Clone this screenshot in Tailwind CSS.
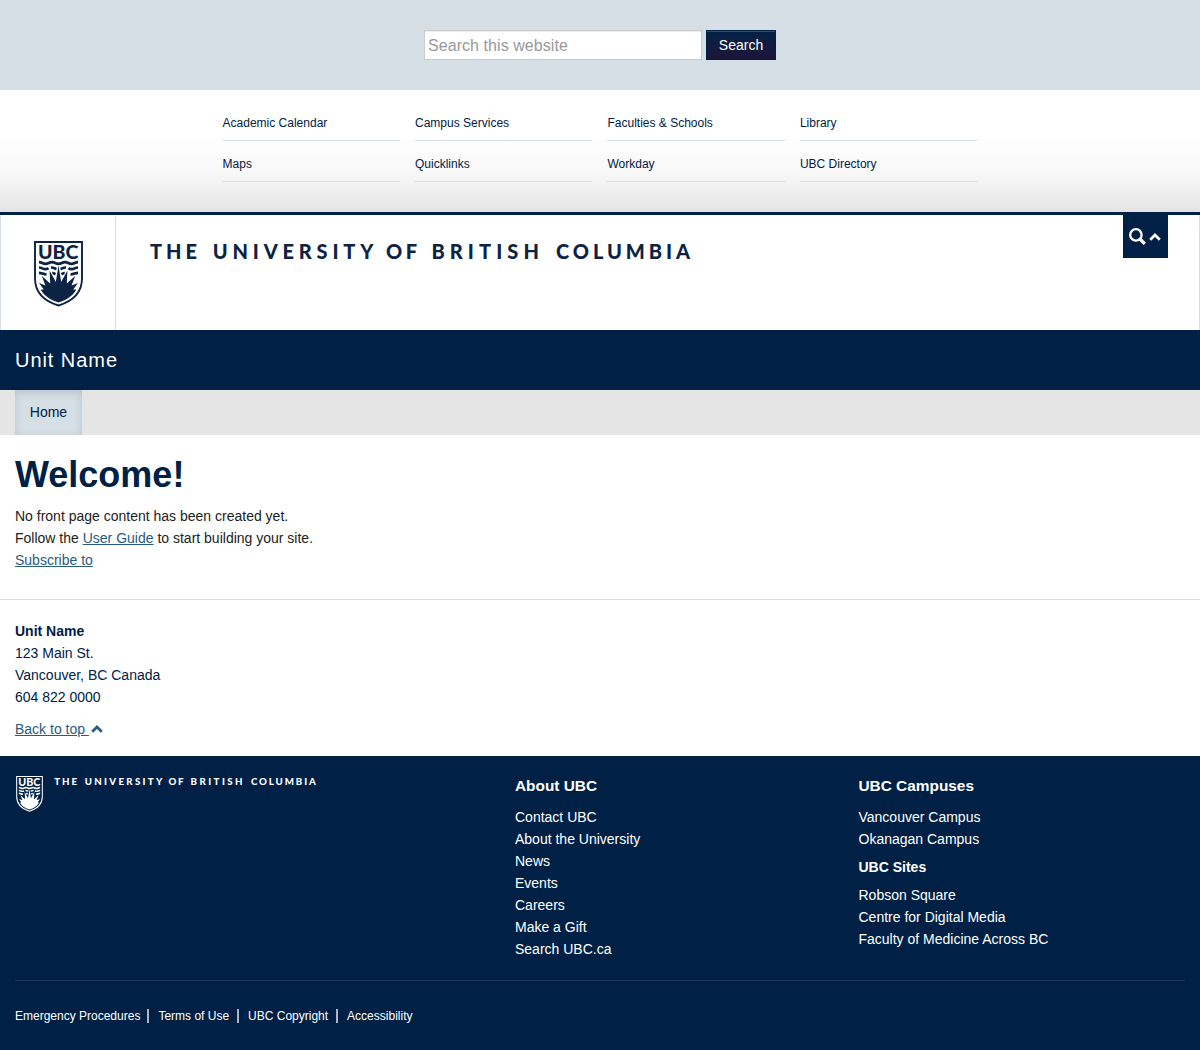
<!DOCTYPE html>
<html lang="en">
<head>
<meta charset="utf-8">
<title>Unit Name</title>
<script src="https://cdn.jsdelivr.net/npm/@tailwindcss/browser@4"></script>
</head>
<body class="bg-white font-['Liberation_Sans',Arial,sans-serif] text-sm/[22px] text-[#222222]">
<svg class="hidden">
  <symbol id="shield" viewBox="0 0 49 66">
    <path d="M1 1H48V37.500C48 52 39 60 24.500 64.500C10 60 1 52 1 37.500Z" fill="none" stroke="currentColor" stroke-width="1.900"/>
    <text x="4" y="17.900" font-family="Lato, sans-serif" font-weight="900" font-size="19.500" textLength="40.400" lengthAdjust="spacingAndGlyphs" fill="currentColor">UBC</text>
    <g fill="none" stroke="currentColor" stroke-width="2.700">
      <path d="M5 21.200C8 21.200 8.500 22.900 11.500 22.900S15 21.200 18 21.200S21.500 22.900 24.500 22.900S28 21.200 31 21.200S34.500 22.900 37.500 22.900S41 21.200 44 21.200"/>
      <path d="M5 26.500C8 26.500 8.500 28.200 11.500 28.200C13 28.200 13.500 27.800 14.500 27.200M17 26.500C19.500 26.300 20.500 27.500 22.500 28M26.500 28C28.500 27.500 29.500 26.300 32 26.500M34.500 27.200C35.500 27.800 36 28.200 37.500 28.200C40.500 28.200 41 26.500 44 26.500"/>
      <path d="M5 31.800C8 31.800 9 33.500 12.500 33.500M18.300 32C19.500 31.800 20.200 32.500 21.500 33.300M27.500 33.300C28.800 32.500 29.500 31.800 30.700 32M36.500 33.500C40 33.500 41 31.800 44 31.800"/>
    </g>
    <path d="M24.500 24.500L27.200 41L33.400 29.500L32.800 42.500L41.200 35L37.600 44.500L44 42L39.200 48.500L42.300 48.500C38.500 55.500 32 59 24.500 61.500C17 59 10.500 55.500 6.700 48.500L9.800 48.500L5 42L11.400 44.500L7.800 35L16.200 42.500L15.600 29.500L21.800 41Z" fill="currentColor"/>
  </symbol>
  <symbol id="wordmark" viewBox="0 0 542 20">
    <g font-family="Lato, sans-serif" font-weight="900" font-size="20" fill="currentColor">
      <text x="0" y="17.300" textLength="47">THE</text>
      <text x="62.800" y="17.300" textLength="160.500">UNIVERSITY</text>
      <text x="236" y="17.300" textLength="31">OF</text>
      <text x="281.400" y="17.300" textLength="107.500">BRITISH</text>
      <text x="406" y="17.300" textLength="134">COLUMBIA</text>
    </g>
  </symbol>
  <symbol id="chevron" viewBox="0 0 12 8">
    <path d="M1.200 6.800L6 2L10.800 6.800" fill="none" stroke="currentColor" stroke-width="2.700"/>
  </symbol>
</svg>

<section class="flex h-[90px] justify-center gap-1 bg-[#d6dfe6] pt-[30px]">
  <input type="text" placeholder="Search this website" class="h-[30px] w-[278px] border border-[#cccccc] bg-white px-[3px] pt-[2px] text-base tracking-[0.06px] shadow-[inset_0_1px_1px_rgba(0,0,0,0.075)] placeholder:text-[#999999]">
  <button class="h-[30px] w-[70px] border border-[#002145] bg-linear-to-b from-[#002145] to-[#1b1638] pb-px text-sm text-white shadow-[inset_0_1px_0_rgba(255,255,255,0.2)]">Search</button>
</section>

<nav class="h-[122px] bg-linear-to-b from-white from-35% via-[#f7f7f7] via-70% to-[#e4e4e4] pt-[10px]">
  <div class="ml-[222.600px] grid w-[754.500px] grid-cols-4 gap-x-[15.300px] text-xs/[15px] text-[#002145]">
    <a class="h-[41px] border-b border-[#d4dee6] pt-[16px]">Academic Calendar</a>
    <a class="h-[41px] border-b border-[#d4dee6] pt-[16px]">Campus Services</a>
    <a class="h-[41px] border-b border-[#d4dee6] pt-[16px]">Faculties &amp; Schools</a>
    <a class="h-[41px] border-b border-[#d4dee6] pt-[16px]">Library</a>
    <a class="h-[41px] border-b border-[#d4dee6] pt-[16px]">Maps</a>
    <a class="h-[41px] border-b border-[#d4dee6] pt-[16px]">Quicklinks</a>
    <a class="h-[41px] border-b border-[#d4dee6] pt-[16px]">Workday</a>
    <a class="h-[41px] border-b border-[#d4dee6] pt-[16px]">UBC Directory</a>
  </div>
</nav>

<header class="h-[118px] border-t-3 border-[#002145]">
  <div class="flex h-full border-x border-[#d6dfe6] text-[#0c2344]">
    <div class="h-full w-[115px] border-r border-[#d6dfe6] pt-[26px] pl-[33px]">
      <svg class="h-[66px] w-[49px]"><use href="#shield"/></svg>
    </div>
    <svg class="mt-[27px] ml-[34px] h-5 w-[542px]"><use href="#wordmark"/></svg>
    <button class="mr-[31px] ml-auto flex h-[43px] w-[45px] items-center bg-[#002145] pl-[6px] text-white">
      <svg class="size-[17px]" viewBox="0 0 17 17" fill="none" stroke="currentColor"><circle cx="6.900" cy="6.900" r="5.700" stroke-width="2.300"/><path d="M11 11L15.800 15.800" stroke-width="3.200"/></svg>
      <svg class="ml-[3px] h-2 w-3"><use href="#chevron"/></svg>
    </button>
  </div>
</header>

<div class="h-[60px] bg-[#002145] pl-[15px] text-xl/[60px] tracking-[0.95px] text-white">Unit Name</div>
<nav class="h-[45px] bg-[#e5e5e5] pl-[15px]">
  <a class="inline-block h-[45px] w-[67px] bg-[#d6dfe6] text-center leading-[45px] text-[#002145] shadow-[inset_0_3px_8px_rgba(0,0,0,0.125)]">Home</a>
</nav>

<main class="h-[165px] border-b border-[#d6dfe6] px-[15px] pt-[20px]">
  <h1 class="mb-[10px] text-4xl/[40px] font-bold text-[#002145]">Welcome!</h1>
  <p>No front page content has been created yet.</p>
  <p>Follow the <a class="text-[#2a5b80] underline">User Guide</a> to start building your site.</p>
  <p><a class="text-[#2a5b80] underline">Subscribe to</a></p>
</main>

<section class="h-[156px] px-[15px] pt-[20px] text-[#002145]">
  <p class="font-bold">Unit Name</p>
  <p>123 Main St.</p>
  <p>Vancouver, BC Canada</p>
  <p>604 822 0000</p>
  <a class="mt-[10px] flex items-center text-[#2a5b80]"><span class="whitespace-pre underline">Back to top </span><svg class="mb-px ml-[2px] h-2 w-3"><use href="#chevron"/></svg></a>
</section>

<footer class="h-[294px] bg-[#002145] px-[15px] text-white">
  <div class="flex h-[225px] border-b border-[#193659]">
    <div class="flex w-[500px] pt-[19px]">
      <svg class="mt-px ml-px h-[36px] w-[27px]"><use href="#shield"/></svg>
      <svg class="mt-[2px] ml-[11px] h-[9.700px] w-[263px]"><use href="#wordmark"/></svg>
    </div>
    <div class="w-[343.500px] pt-[20px]">
      <h2 class="mb-[10px] text-[15.400px]/[20px] font-bold">About UBC</h2>
      <p>Contact UBC</p><p>About the University</p><p>News</p><p>Events</p><p>Careers</p><p>Make a Gift</p><p>Search UBC.ca</p>
    </div>
    <div class="pt-[20px]">
      <h2 class="mb-[10px] text-[15.400px]/[20px] font-bold">UBC Campuses</h2>
      <p>Vancouver Campus</p><p>Okanagan Campus</p>
      <h3 class="my-[6px] text-sm/[22px] font-bold">UBC Sites</h3>
      <p>Robson Square</p><p>Centre for Digital Media</p><p>Faculty of Medicine Across BC</p>
    </div>
  </div>
  <div class="flex items-center pt-[28px] text-xs/[14px]">
    <a class="mr-[9px] border-r-2 border-[#adb7c2] pr-[7px]">Emergency Procedures</a>
    <a class="mr-[9px] border-r-2 border-[#adb7c2] pr-[8px]">Terms of Use</a>
    <a class="mr-[9px] border-r-2 border-[#adb7c2] pr-[8px]">UBC Copyright</a>
    <a>Accessibility</a>
  </div>
</footer>
</body>
</html>
